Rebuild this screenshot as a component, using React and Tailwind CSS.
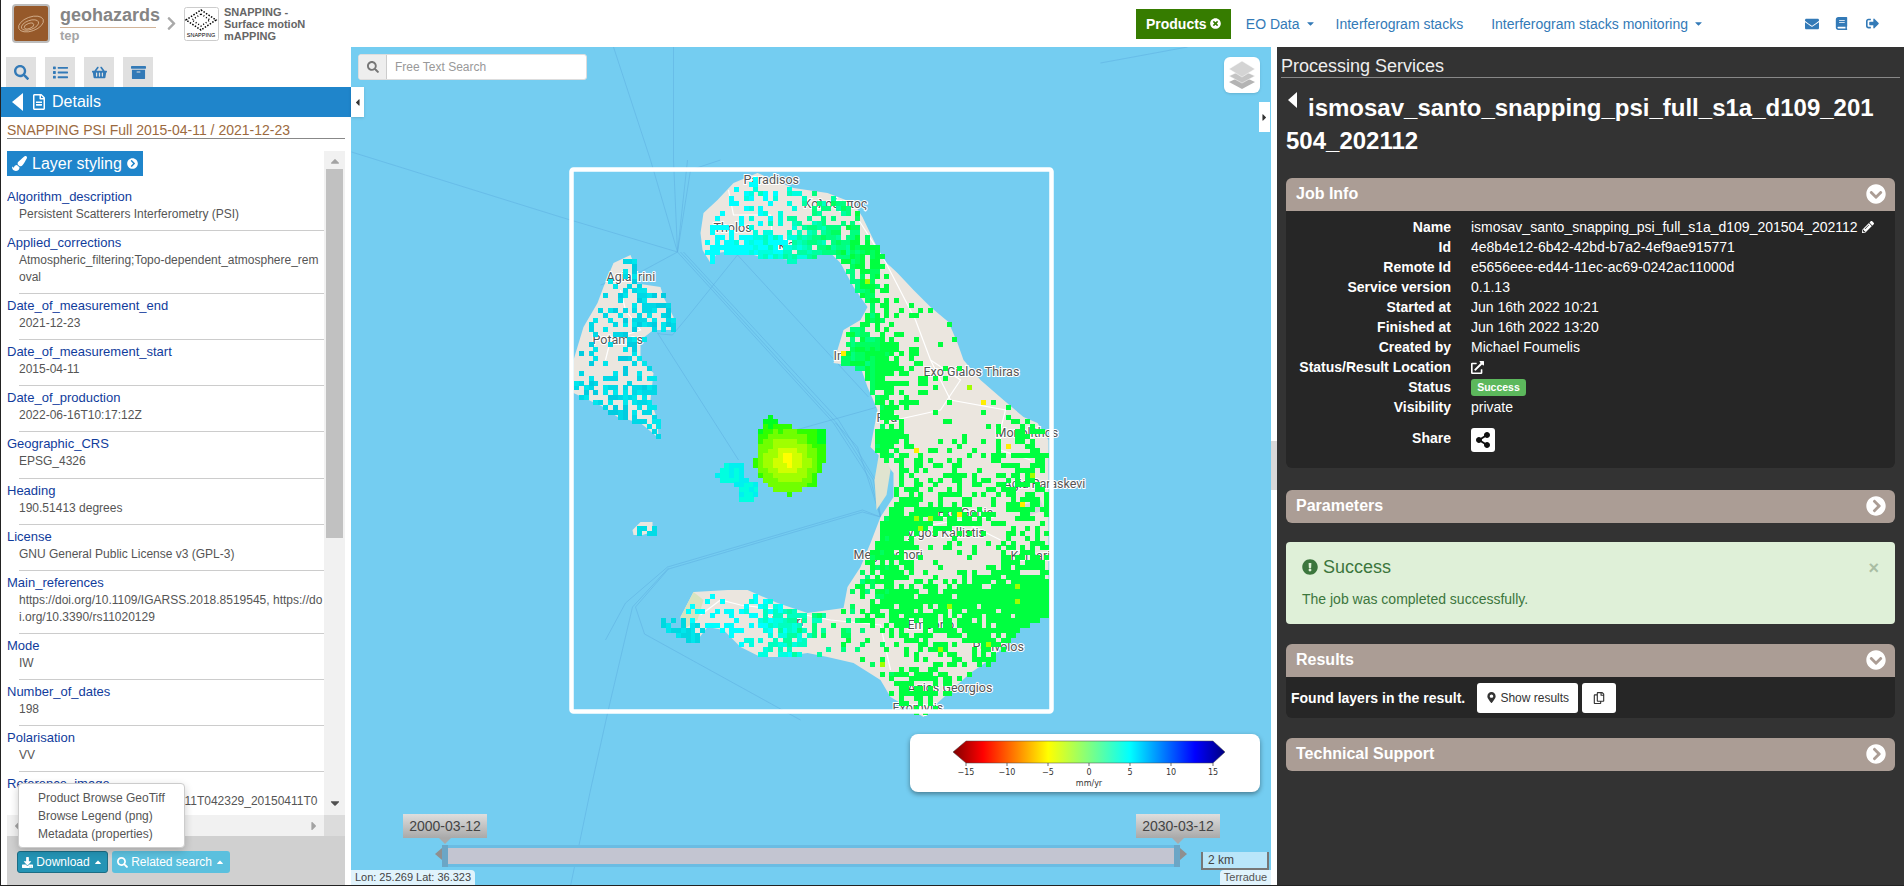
import {
  FaSearch, FaList, FaShoppingBasket, FaArchive, FaRegFileAlt, FaPaintBrush, FaChevronCircleRight, FaChevronCircleDown,
  FaTimesCircle, FaEnvelope, FaBook, FaSignOutAlt, FaPencilAlt, FaExternalLinkAlt, FaShareAlt, FaExclamationCircle,
  FaMapMarkerAlt, FaRegCopy, FaDownload, FaCaretLeft, FaCaretRight, FaCaretDown, FaCaretUp, FaChevronRight,
} from 'react-icons/fa'

const rows = [
  ['Algorithm_description', 'Persistent Scatterers Interferometry (PSI)'],
  ['Applied_corrections', 'Atmospheric_filtering;Topo-dependent_atmosphere_removal'],
  ['Date_of_measurement_end', '2021-12-23'],
  ['Date_of_measurement_start', '2015-04-11'],
  ['Date_of_production', '2022-06-16T10:17:12Z'],
  ['Geographic_CRS', 'EPSG_4326'],
  ['Heading', '190.51413 degrees'],
  ['License', 'GNU General Public License v3 (GPL-3)'],
  ['Main_references', 'https://doi.org/10.1109/IGARSS.2018.8519545, https://doi.org/10.3390/rs11020129'],
  ['Mode', 'IW'],
  ['Number_of_dates', '198'],
  ['Polarisation', 'VV'],
  ['Reference_image', 'S1A_IW_SLC__1SDV_20150411T042329_20150411T042356_005450'],
]

const jobInfo = [
  ['Name', 'ismosav_santo_snapping_psi_full_s1a_d109_201504_202112'],
  ['Id', '4e8b4e12-6b42-42bd-b7a2-4ef9ae915771'],
  ['Remote Id', 'e5656eee-ed44-11ec-ac69-0242ac11000d'],
  ['Service version', '0.1.13'],
  ['Started at', 'Jun 16th 2022 10:21'],
  ['Finished at', 'Jun 16th 2022 13:20'],
  ['Created by', 'Michael Foumelis'],
]

// map outlines, in page coordinates
const thera = [[702,250],[700,233],[703,213],[717,200],[733,183],[757,173],[773,180],[793,188],[827,193],[853,203],[862,217],[873,240],[883,260],[897,273],[913,290],[930,307],[948,322],[957,343],[963,360],[980,380],[1003,400],[1023,417],[1037,423],[1048,440],[1048,507],[1048,613],[1013,630],[993,657],[970,673],[960,682],[937,703],[923,717],[890,697],[880,680],[853,663],[827,657],[807,653],[780,657],[760,657],[740,647],[723,630],[707,627],[697,640],[683,637],[680,617],[693,592],[727,590],[747,590],[777,603],[807,613],[843,608],[847,587],[860,567],[870,543],[880,517],[893,497],[893,473],[880,457],[870,447],[877,410],[867,387],[860,367],[833,363],[843,330],[860,320],[867,307],[853,287],[840,263],[827,250],[793,260],[760,257],[737,250],[717,253],[710,263]]
const therasia = [[630,255],[613,263],[603,287],[597,303],[583,327],[573,360],[573,393],[603,407],[617,417],[640,423],[658,438],[657,420],[650,400],[653,373],[640,360],[640,340],[653,330],[675,330],[673,317],[663,297],[660,287],[633,283],[632,260]]
const neaKameni = [[760,417],[770,412],[773,423],[823,427],[825,437],[823,460],[820,460],[812,482],[787,493],[773,490],[758,477],[752,462],[752,460],[757,427]]
const paleaKameni = [[710,472],[720,463],[738,463],[743,477],[755,483],[757,490],[750,498],[738,498],[735,483],[717,478]]
const aspronisi = [[632,530],[640,522],[652,522],[652,532],[642,535],[633,535]]
const akrotiriTip = [[658,618],[680,617],[700,625],[698,640],[685,640],[660,625]]

const blobs = [
  [760,248,60,10,.9],[820,250,25,14,.7],[855,290,18,30,.7],[870,355,20,30,.7],[850,360,15,12,.9],[878,430,14,40,.75],
  [1030,470,22,40,.5],[1030,560,25,35,.4],[1030,600,25,20,.9],[960,600,45,18,.8],[900,610,15,20,.3],[930,520,25,25,.3],
  [885,525,12,18,.8],[880,560,18,30,.55],[895,505,20,30,.3],[950,490,25,20,.15],[920,660,25,25,.4],[985,640,20,15,.6],[905,690,25,10,.5],[780,615,18,22,.7],[850,210,25,15,.2],
]

function rng(seed) {
  return () => {
    seed = (seed + 0x6d2b79f5) | 0
    let t = Math.imul(seed ^ (seed >>> 15), 1 | seed)
    t = (t + Math.imul(t ^ (t >>> 7), 61 | t)) ^ t
    return ((t ^ (t >>> 14)) >>> 0) / 4294967296
  }
}

function inside(p, x, y) {
  let hit = false
  for (let i = 0, j = p.length - 1; i < p.length; j = i++) {
    if (p[i][1] > y !== p[j][1] > y && x < ((p[j][0] - p[i][0]) * (y - p[i][1])) / (p[j][1] - p[i][1]) + p[i][0]) hit = !hit
  }
  return hit
}

function buildCells() {
  const rand = rng(41)
  const groups = {}
  const add = (c, x, y) => { groups[c] = (groups[c] || '') + `M${x} ${y}h5v5h-5z` }
  const size = 4.85
  for (let gy = 0; gy < 112; gy++) {
    for (let gx = 0; gx < 98; gx++) {
      const x = 573 + gx * size
      const y = 172 + gy * size
      const px = Math.round(x)
      const py = Math.round(y)
      const r = rand()
      const r2 = rand()
      if (inside(neaKameni, x, y)) {
        const d = Math.hypot(x - 784, y - 459) + r2 * 5
        add(d < 9 ? '#ffff00' : d < 17 ? '#d0ff00' : d < 25 ? '#a0ff00' : d < 34 ? '#70ff00' : d < 42 ? '#30ff00' : '#00ff20', px, py)
      } else if (inside(paleaKameni, x, y)) {
        add(r2 < .5 ? '#00ffe0' : '#00f0f0', px, py)
      } else if (inside(aspronisi, x, y)) {
        if (r < .6) add('#00dce6', px, py)
      } else if (inside(akrotiriTip, x, y)) {
        if (r < .75) add(r2 < .5 ? '#00d8e0' : '#00e6ec', px, py)
      } else if (inside(therasia, x, y)) {
        let d = .28
        if (x > 630 && y < 345) d = .6
        if (y > 385) d = .65
        if (r < d) add(r2 < .015 ? '#0050e0' : r2 < .45 ? '#00d8e6' : r2 < .7 ? '#00cce0' : '#00e6ec', px, py)
      } else if (inside(thera, x, y)) {
        let d = x > 880 && y < 420 ? .08 : .12
        if (y < 250 && x < 870) d = .28
        if (y > 580 && x < 880) d = .22
        if (y > 580 && x < 800) d = .3
        for (const [cx, cy, sx, sy, a] of blobs) d += a * Math.exp(-((x - cx) ** 2) / (2 * sx * sx) - ((y - cy) ** 2) / (2 * sy * sy))
        if (r < Math.min(d, .95)) {
          const t = Math.max(0, Math.min(1, (x - 750 + (r2 - .5) * 60) / 120))
          let c = ['#00ffff', '#00ffe0', '#00ffc0', '#00ffa0', '#00ff80', '#00ff60', '#00ff40'][Math.round(t * 6)]
          if (r2 > .985) c = '#a0ff00'
          if (r2 > .995) c = '#ffee00'
          add(c, px, py)
        }
      }
    }
  }
  return groups
}

const cells = buildCells()
const pts = (p) => p.map((a) => a.join(',')).join(' ')

const labels = [
  ['Paradisos', 743, 184], ['Κολούμπος', 803, 208], ['Tholos', 713, 232], ['Finikia', 758, 249], ['Agia Irini', 606, 281],
  ['Potamos', 592, 344], ['Imerovigli', 833, 360], ['Exo Gialos Thiras', 923, 376], ['Fira', 876, 422], ['Monolithos', 995, 437],
  ['Agia Paraskevi', 1003, 488], ['Exo Gonia', 937, 517], ['Pyrgos Kallistis', 899, 537], ['Megalochori', 853, 559], ['Kamari', 1010, 560],
  ['Akrotiri', 763, 626], ['Emporio', 907, 629], ['Perivolos', 972, 651], ['Agios Georgios', 907, 692], ['Exomytis', 892, 712],
]

const seaLines = [
  '351,152 560,217 677,252', '650,160 677,252', '673,160 677,252', '687,160 677,252', '720,160 690,170 677,252', '613,47 650,160', '673,47 673,160', '1100,63 1187,47',
  '677,252 833,423 870,480 880,517', '680,252 836,423 873,480 880,517', '683,252 838,420 875,480 880,517', '737,255 868,397',
  '737,255 687,317 672,335 660,334 657,333 738,460', '880,517 862,510 667,567', '880,517 862,512 668,569', '667,567 625,603 605,640', '668,568 632,607 608,709 590,790',
  '668,569 635,607 644,634 800,720', '590,790 570,886', '677,252 640,272 600,285', '880,517 857,447 835,423', '877,407 813,425 760,440',
]

function Map() {
  return (
    <svg viewBox="351 47 919 838" className="absolute inset-0 h-full w-full">
      {seaLines.map((l, i) => <polyline key={i} points={l} fill="none" stroke="#5fb2e2" strokeWidth="0.8" opacity="0.75" />)}
      <polygon points={pts(thera)} fill="#ebe6df" />
      <polygon points={pts(therasia)} fill="#ebe6df" />
      <polygon points={pts(aspronisi)} fill="#ebe6df" />
      <polygon points="680,617 693,592 703,600 697,620 685,628" fill="#d8e4c0" />
      <polygon points="880,445 890,470 886,495 876,510 874,480" fill="#e0e4d0" />
      <polygon points="795,225 820,222 830,240 800,245" fill="#dfe3cc" />
      <polygon points="1022,505 1040,500 1044,510 1030,515" fill="#d3d6dc" />
      <g fill="none" stroke="#fff" strokeWidth="1.2">
        <polyline points="728,190 733,215 770,215 772,240" />
        <polyline points="855,215 885,262 915,320 930,360 950,400 1005,410 1000,430 1000,450 1030,460" />
        <polyline points="930,360 960,380 940,410 895,420" />
        <polyline points="620,290 625,310 640,330 610,340 605,360" />
        <polyline points="700,615 720,600 740,605 780,610 830,620 880,625 890,670" />
        <polyline points="900,530 960,520 1000,540" />
      </g>
      <g fontFamily="Roboto, sans-serif" fontSize="12.5" fill="#555" stroke="#fff" strokeWidth="2" paintOrder="stroke">
        {labels.map(([t, x, y]) => <text key={t} x={x} y={y}>{t}</text>)}
      </g>
      <g shapeRendering="crispEdges">
        {Object.entries(cells).map(([c, d]) => <path key={c} d={d} fill={c} />)}
      </g>
      <rect x="571" y="169.5" width="480" height="542" rx="2" fill="none" stroke="#fff" strokeWidth="4.5" />
    </svg>
  )
}

function Legend() {
  const ticks = [['−15', 966], ['−10', 1007], ['−5', 1048], ['0', 1089], ['5', 1130], ['10', 1171], ['15', 1213]]
  return (
    <div className="absolute left-[559px] top-[687px] h-[58px] w-[350px] rounded-lg bg-white shadow-[0_2px_5px_rgba(0,0,0,0.4)]">
      <svg viewBox="910 734 350 58" className="h-full w-full">
        <defs>
          <linearGradient id="jet">
            <stop offset="0" stopColor="#800000" />
            <stop offset="0.11" stopColor="#ff0000" />
            <stop offset="0.35" stopColor="#ffff00" />
            <stop offset="0.5" stopColor="#80ff80" />
            <stop offset="0.65" stopColor="#00ffff" />
            <stop offset="0.89" stopColor="#0000ff" />
            <stop offset="1" stopColor="#000080" />
          </linearGradient>
        </defs>
        <polygon points="953,752 966,741 1213,741 1225,752 1213,763 966,763" fill="url(#jet)" stroke="#444" strokeWidth="0.5" />
        {ticks.map(([t, x]) => (
          <g key={t}>
            <line x1={x} x2={x} y1="763" y2="766" stroke="#333" strokeWidth="0.7" />
            <text x={x} y="775" textAnchor="middle" fontFamily="DejaVu Sans, sans-serif" fontSize="8" fill="#333">{t}</text>
          </g>
        ))}
        <text x="1089" y="786" textAnchor="middle" fontFamily="DejaVu Sans, sans-serif" fontSize="8" fill="#333">mm/yr</text>
      </svg>
    </div>
  )
}

function SliderTip({ left, children }) {
  return (
    <div className={`absolute top-[767px] flex h-[24px] w-[84px] items-center justify-center bg-gradient-to-b from-[#dedede] to-[#a9a9a9] text-sm text-[#444] ${left}`}>
      {children}
      <span className="absolute left-[36px] top-[24px] h-0 w-0 border-x-[6px] border-t-[6px] border-x-transparent border-t-[#a9a9a9]" />
    </div>
  )
}

function Slider() {
  return (
    <>
      <SliderTip left="left-[52px]">2000-03-12</SliderTip>
      <SliderTip left="left-[785px]">2030-03-12</SliderTip>
      <div className="absolute left-[91px] top-[798px] flex h-[22px] w-[738px] items-stretch">
        <div className="w-[6px] bg-[#6ba6c6]" />
        <div className="flex flex-1 items-center bg-[#6abce3]">
          <div className="h-[16px] w-full bg-[#c3c5d1]" />
        </div>
        <div className="w-[6px] bg-[#6ba6c6]" />
      </div>
      <span className="absolute left-[84px] top-[801px] h-0 w-0 border-y-[6px] border-r-[7px] border-y-transparent border-r-[#8f8f8f]" />
      <span className="absolute left-[829px] top-[801px] h-0 w-0 border-y-[6px] border-l-[7px] border-y-transparent border-l-[#8f8f8f]" />
    </>
  )
}

function MapArea() {
  return (
    <div className="relative min-w-0 flex-1 bg-[#74cdf1]">
      <Map />
      <div className="absolute left-[7px] top-[7px] flex h-[26px] w-[229px] overflow-hidden rounded-[3px] border border-[#ddd] bg-white">
        <div className="flex w-[28px] items-center justify-center border-r border-[#ccc] bg-[#eee] text-[#777]"><FaSearch size={12} /></div>
        <div className="flex items-center pl-[8px] text-xs text-[#999]">Free Text Search</div>
      </div>
      <div className="absolute left-[873px] top-[10px] flex h-[36px] w-[36px] items-center justify-center rounded-md bg-white shadow">
        <svg viewBox="0 0 28 30" width="28" height="30">
          <polygon points="14,16 27,22 14,29 1,22" fill="#b4b4b4" />
          <polygon points="14,10 27,16 14,23 1,16" fill="#c4c4c4" stroke="#fff" strokeWidth="0.5" />
          <polygon points="14,1 27,9 14,17 1,9" fill="#d4d4d4" stroke="#fff" strokeWidth="0.5" />
        </svg>
      </div>
      <div className="absolute left-0 top-[40px] flex h-[30px] w-[13px] items-center justify-center bg-white text-[#333] shadow"><FaCaretLeft size={11} /></div>
      <div className="absolute left-[908px] top-[55px] flex h-[30px] w-[11px] items-center justify-center bg-white text-[#333]"><FaCaretRight size={11} /></div>
      <Legend />
      <Slider />
      <div className="absolute left-[850px] top-[805px] flex h-[18px] w-[68px] items-center border-x-2 border-b-2 border-[#777] bg-[#b9e6fa] pl-[5px] text-xs text-[#444]">2 km</div>
      <div className="absolute bottom-0 right-0 flex h-[15px] w-[51px] items-center justify-center whitespace-nowrap rounded-tl bg-[#e0f3fc] text-[11px] text-[#555]">Terradue</div>
      <div className="absolute bottom-0 left-0 flex h-[15px] w-[124px] items-center justify-center whitespace-nowrap rounded-tr bg-[#e0f3fc] text-[11px] text-[#444]">Lon: 25.269 Lat: 36.323</div>
    </div>
  )
}

function Sidebar() {
  const tabs = [FaSearch, FaList, FaShoppingBasket, FaArchive]
  return (
    <div className="relative flex w-[350px] shrink-0 flex-col bg-white">
      <div className="flex gap-[9px] pl-[5px] pt-[10px]">
        {tabs.map((Icon, i) => (
          <div key={i} className="flex h-[30px] w-[30px] items-center justify-center bg-[#e0e0e0] text-[#337ab7]"><Icon size={15} /></div>
        ))}
      </div>
      <div className="flex h-[30px] items-center bg-[#1f85cb] pl-[11px] text-base text-white">
        <span className="h-0 w-0 border-y-[9px] border-r-[11px] border-y-transparent border-r-white" />
        <FaRegFileAlt size={16} className="ml-[8px] mr-[5px]" />
        Details
      </div>
      <div className="mx-[6px] mt-[6px] h-[16px] border-b border-[#888] text-sm leading-[15px] text-[#9c6a3e]">SNAPPING PSI Full 2015-04-11 / 2021-12-23</div>
      <div className="ml-[6px] mt-[12px] flex min-h-0 w-[338px] flex-1 flex-col">
        <div className="flex min-h-0 flex-1">
          <div className="min-w-0 flex-1 overflow-hidden">
            <div className="flex h-[25px] w-[136px] items-center bg-[#1f85cb] pl-[5px] text-base text-white">
              <FaPaintBrush size={15} className="mr-[5px]" />
              Layer styling
              <FaChevronCircleRight size={11} className="ml-[5px]" />
            </div>
            <div className="mt-[9px]">
              {rows.map(([k, v]) => (
                <div key={k} className="pt-[3px]">
                  <div className="text-[13px] leading-[18px] text-[#103c9c]">{k}</div>
                  <div className="ml-[12px] break-all border-b border-[#ccc] pb-[7.1px] text-xs leading-[17px] text-[#555]">{v}</div>
                </div>
              ))}
            </div>
          </div>
          <div className="flex w-[21px] shrink-0 flex-col items-center bg-[#f1f1f1]">
            <FaCaretUp size={14} className="mt-[3px] text-[#a3a3a3]" />
            <div className="mt-[1px] h-[369px] w-[17px] bg-[#c1c1c1]" />
            <FaCaretDown size={14} className="mt-auto mb-[5px] text-[#505050]" />
          </div>
        </div>
        <div className="flex h-[21px] shrink-0">
          <div className="flex flex-1 items-center justify-between bg-[#f1f1f1] px-[3px] text-[#a3a3a3]">
            <FaCaretLeft size={14} />
            <FaCaretRight size={14} />
          </div>
          <div className="w-[21px] bg-[#dcdcdc]" />
        </div>
        <div className="flex h-[49px] shrink-0 items-start gap-[4px] bg-[#d0d0d0] pl-[10px] pt-[15px] text-xs text-white">
          <div className="flex h-[22px] w-[91px] items-center justify-center gap-[3px] rounded-[3px] border border-[#1b6d85] bg-[#2494b5]">
            <FaDownload size={11} /> Download <FaCaretUp size={10} />
          </div>
          <div className="flex h-[22px] w-[118px] items-center justify-center gap-[3px] rounded-[3px] bg-[#5bc0de]">
            <FaSearch size={11} /> Related search <FaCaretUp size={10} />
          </div>
        </div>
      </div>
      <div className="absolute left-[17px] top-[736px] h-[65px] w-[167px] rounded border border-[#ccc] bg-white pl-[19px] pt-[5px] text-xs leading-[18px] text-[#555] shadow-[0_3px_8px_rgba(0,0,0,0.2)]">
        <div>Product Browse GeoTiff</div>
        <div>Browse Legend (png)</div>
        <div>Metadata (properties)</div>
      </div>
    </div>
  )
}

function CardHeader({ title, open }) {
  const Icon = open ? FaChevronCircleDown : FaChevronCircleRight
  return (
    <div className={`flex h-[33px] items-center justify-between bg-[#ab9d95] pb-[2px] pl-[10px] pr-[9px] text-base font-bold text-white ${open ? 'rounded-t-md' : 'rounded-md'}`}>
      {title}
      <Icon size={20} />
    </div>
  )
}

function RightPanel() {
  return (
    <div className="w-[627px] shrink-0 bg-[#333] text-sm text-white">
      <div className="mx-[4px] mt-[9px] border-b border-[#888] pb-px text-lg leading-[20px] text-[#eee]">Processing Services</div>
      <h2 className="ml-[9px] mt-[13px] w-[592px] break-all text-2xl font-bold leading-[33px]">
        <span className="relative -top-[8px] ml-[2px] mr-[11px] inline-block h-0 w-0 border-y-[8px] border-r-[9px] border-y-transparent border-r-white" />
        ismosav_santo_snapping_psi_full_s1a_d109_201504_202112
      </h2>
      <div className="mx-[9px] mt-[21px]">
        <CardHeader title="Job Info" open />
        <div className="h-[257px] rounded-b-md bg-[#262626] pt-[6px] leading-[20px]">
          {jobInfo.map(([k, v], i) => (
            <div key={k} className="flex">
              <div className="w-[165px] shrink-0 text-right font-bold">{k}</div>
              <div className="ml-[20px] flex items-center gap-[4px]">{v}{i === 0 && <FaPencilAlt size={12} />}</div>
            </div>
          ))}
          <div className="flex">
            <div className="w-[165px] shrink-0 text-right font-bold">Status/Result Location</div>
            <div className="ml-[20px] flex items-center"><FaExternalLinkAlt size={13} /></div>
          </div>
          <div className="flex">
            <div className="w-[165px] shrink-0 text-right font-bold">Status</div>
            <div className="ml-[20px] flex items-center"><span className="flex h-[17px] w-[55px] items-center justify-center rounded-[3px] bg-[#5cb85c] text-[10.5px] font-bold">Success</span></div>
          </div>
          <div className="flex">
            <div className="w-[165px] shrink-0 text-right font-bold">Visibility</div>
            <div className="ml-[20px]">private</div>
          </div>
          <div className="mt-[11px] flex">
            <div className="w-[165px] shrink-0 text-right font-bold">Share</div>
            <div className="ml-[20px] flex h-[24px] w-[24px] items-center justify-center rounded-[3px] bg-white text-[#111]"><FaShareAlt size={16} /></div>
          </div>
        </div>
        <div className="mt-[22px]"><CardHeader title="Parameters" /></div>
        <div className="relative mt-[19px] h-[82px] rounded bg-[#dff0d8] px-[16px] pt-[13px] text-[#3c763d]">
          <div className="flex items-center gap-[5px] text-lg leading-[24px]"><FaExclamationCircle size={16} /> Success</div>
          <p className="mt-[10px]">The job was completed successfully.</p>
          <span className="absolute right-[16px] top-[14px] text-lg font-bold leading-[24px] text-[#a9bda3]">×</span>
        </div>
        <div className="mt-[20px]"><CardHeader title="Results" open /></div>
        <div className="flex h-[41px] items-center rounded-b-md bg-[#262626] pl-[5px]">
          <span className="font-bold">Found layers in the result.</span>
          <div className="ml-[12px] flex h-[30px] w-[101px] items-center justify-center gap-[3px] rounded-[3px] bg-white text-xs text-[#333]"><FaMapMarkerAlt size={11} /> Show results</div>
          <div className="ml-[4px] flex h-[30px] w-[34px] items-center justify-center rounded-[3px] bg-white text-[#333]"><FaRegCopy size={12} /></div>
        </div>
        <div className="mt-[20px]"><CardHeader title="Technical Support" /></div>
      </div>
    </div>
  )
}

function Header() {
  return (
    <header className="flex h-[47px] shrink-0 items-center bg-white">
      <svg viewBox="0 0 38 39" width="38" height="39" className="ml-[11px]">
        <rect x="1" y="1" width="36" height="37" rx="3" fill="#96592a" stroke="#bdbdbd" strokeWidth="2" />
        <g fill="none" stroke="#e2c4a4" strokeWidth="0.7">
          <ellipse cx="19" cy="20" rx="13" ry="7" transform="rotate(-20 19 20)" />
          <ellipse cx="18" cy="21" rx="9" ry="4.5" transform="rotate(-20 18 21)" />
          <ellipse cx="17" cy="22" rx="5" ry="2.5" transform="rotate(-20 17 22)" />
        </g>
      </svg>
      <div className="ml-[10px] w-[96px] font-bold text-[#858585]">
        <div className="border-b border-[#d2b498] text-[18px] leading-[24px]">geohazards</div>
        <div className="text-[13px] leading-[16px] text-[#a5a5a5]">tep</div>
      </div>
      <FaChevronRight size={15} className="ml-[8px] text-[#a9a9a9]" />
      <svg viewBox="0 0 35 34" width="35" height="34" className="ml-[5px]">
        <rect x="0.5" y="0.5" width="34" height="33" rx="2" fill="#fff" stroke="#ccc" />
        <polygon points="17,3 32,13 17,23 2,13" fill="none" stroke="#000" strokeWidth="1.5" strokeDasharray="1.5 1.5" />
        <polygon points="17,7 26,13 17,19 8,13" fill="none" stroke="#000" strokeWidth="1.5" strokeDasharray="1 2" />
        <text x="17" y="30" textAnchor="middle" fontSize="5.5" fontFamily="Liberation Sans, sans-serif">SNAPPING</text>
      </svg>
      <div className="ml-[5px] w-[100px] text-[11px] font-bold leading-[12px] text-[#666]">SNAPPING -<br />Surface motioN<br />mAPPING</div>
      <nav className="ml-auto flex items-center text-sm text-[#337ab7]">
        <div className="flex h-[30px] w-[95px] items-center justify-center gap-[3px] bg-[#367c00] font-bold text-white">Products <FaTimesCircle size={11} /></div>
        <div className="ml-[15px] flex items-center gap-[5px]">EO Data <FaCaretDown size={11} /></div>
        <div className="ml-[20px]">Interferogram stacks</div>
        <div className="ml-[28px] flex items-center gap-[5px]">Interferogram stacks monitoring <FaCaretDown size={11} /></div>
        <FaEnvelope size={14} className="ml-[101px]" />
        <FaBook size={13} className="ml-[16px]" />
        <FaSignOutAlt size={13} className="ml-[18px] mr-[25px]" />
      </nav>
    </header>
  )
}

export default function App() {
  return (
    <div className="flex h-[886px] w-[1904px] flex-col overflow-hidden border-b border-l border-[#222] bg-white font-['Liberation_Sans',Arial,sans-serif]">
      <Header />
      <div className="flex min-h-0 flex-1">
        <Sidebar />
        <MapArea />
        <div className="flex w-[6px] shrink-0 items-start bg-white pt-[394px]"><div className="h-[49px] w-full bg-[#d8d8d8]" /></div>
        <RightPanel />
      </div>
    </div>
  )
}
